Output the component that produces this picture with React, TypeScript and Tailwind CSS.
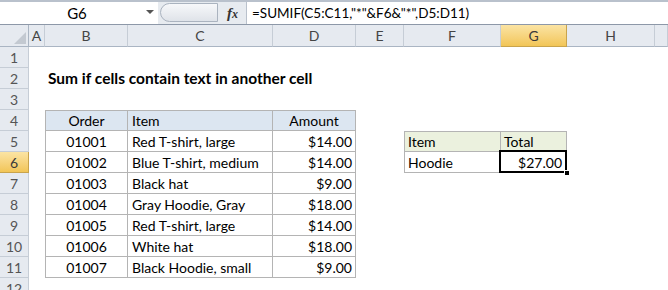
import { ReactNode } from "react";

type CellProps = {
  children?: ReactNode;
  className?: string;
};

const Cell = ({ children, className = "" }: CellProps) => (
  <div className={`flex items-center overflow-visible whitespace-nowrap ${className}`}>
    {children}
  </div>
);

const colLetters = ["A", "B", "C", "D", "E", "F", "G", "H", ""];

const orders = [
  { order: "01001", item: "Red T-shirt, large", amount: "$14.00" },
  { order: "01002", item: "Blue T-shirt, medium", amount: "$14.00" },
  { order: "01003", item: "Black hat", amount: "$9.00" },
  { order: "01004", item: "Gray Hoodie, Gray", amount: "$18.00" },
  { order: "01005", item: "Red T-shirt, large", amount: "$14.00" },
  { order: "01006", item: "White hat", amount: "$18.00" },
  { order: "01007", item: "Black Hoodie, small", amount: "$9.00" },
];

const tbl = "border-[#b4b4b4]";

const RowHeader = ({ n }: { n: number }) => (
  <Cell
    className={`justify-center border-b border-r text-[14px] ${
      n === 6
        ? "bg-gradient-to-b from-[#fbe4a3] to-[#f2c556] border-[#c9a44c] text-[#3a3a3a]"
        : "bg-[#e6eaf0] border-[#c6cdd6] text-[#555]"
    }`}
  >
    {n}
  </Cell>
);

const App = () => {
  const rows: ReactNode[] = [];

  for (let n = 1; n <= 12; n++) {
    const r = n - 5; // index into orders for rows 5..11
    const cells: ReactNode[] = [<RowHeader key="h" n={n} />];
    // A
    cells.push(<Cell key="A" />);

    if (n === 2) {
      cells.push(
        <Cell key="B" className="col-span-3 pl-[3px] text-[15.5px] font-bold">
          Sum if cells contain text in another cell
        </Cell>
      );
    } else if (n === 4) {
      cells.push(
        <Cell key="B" className={`justify-center bg-[#dce6f1] border-l border-t border-r border-b ${tbl}`}>
          Order
        </Cell>,
        <Cell key="C" className={`pl-[4px] bg-[#dce6f1] border-t border-r border-b ${tbl}`}>
          Item
        </Cell>,
        <Cell key="D" className={`justify-center bg-[#dce6f1] border-t border-r border-b ${tbl}`}>
          Amount
        </Cell>
      );
    } else if (r >= 0 && r < orders.length) {
      const o = orders[r];
      cells.push(
        <Cell key="B" className={`justify-center border-l border-r border-b ${tbl}`}>
          {o.order}
        </Cell>,
        <Cell key="C" className={`pl-[4px] border-r border-b ${tbl}`}>
          {o.item}
        </Cell>,
        <Cell key="D" className={`justify-end pr-[3px] border-r border-b ${tbl}`}>
          {o.amount}
        </Cell>
      );
    } else {
      cells.push(<Cell key="B" />, <Cell key="C" />, <Cell key="D" />);
    }

    // E
    cells.push(<Cell key="E" />);

    if (n === 5) {
      cells.push(
        <Cell key="F" className={`pl-[3px] bg-[#ebf1de] border-l border-t border-r border-b ${tbl}`}>
          Item
        </Cell>,
        <Cell key="G" className={`pl-[3px] bg-[#ebf1de] border-t border-r border-b ${tbl}`}>
          Total
        </Cell>
      );
    } else if (n === 6) {
      cells.push(
        <Cell key="F" className={`pl-[3px] border-l border-r border-b ${tbl}`}>
          Hoodie
        </Cell>,
        <Cell key="G" className={`relative justify-end pr-[4px] border-r border-b ${tbl}`}>
          $27.00
          <div className="absolute -left-[2px] -top-[2px] -right-[1px] -bottom-[1px] border-2 border-black" />
          <div className="absolute -right-[4px] -bottom-[4px] h-[6px] w-[6px] bg-black border border-white" />
        </Cell>
      );
    } else {
      cells.push(<Cell key="F" />, <Cell key="G" />);
    }

    cells.push(<Cell key="H" />, <Cell key="I" />);
    rows.push(...cells.map((c, i) => <div key={`${n}-${i}`} className="contents">{c}</div>));
  }

  return (
    <div className="h-[290px] w-[668px] overflow-hidden bg-white text-[14px] text-black font-['Lato','Liberation_Sans',sans-serif]">
      {/* formula bar */}
      <div className="flex h-[25px] border-t-2 border-[#b9c1cc] border-b border-b-[#8d98a8] bg-white">
        <div className="relative flex w-[158px] items-center justify-center pr-[4px] text-[15px]">
          G6
          <span className="absolute right-[4px] top-[8px] h-0 w-0 border-x-[4px] border-t-[4px] border-x-transparent border-t-[#555]" />
        </div>
        <div className="relative flex w-[88px] items-center justify-end bg-[#e7ebf0] pr-[8px]">
          <div className="absolute left-[2px] top-[1px] h-[19px] w-[58px] rounded-l-full border border-[#aab3bf] bg-gradient-to-b from-[#f7f8fa] to-[#dfe3e9]" />
          <span className="relative font-['Liberation_Serif',serif] text-[15px] font-bold italic text-[#333]">
            f<span className="text-[12px]">x</span>
          </span>
        </div>
        <div className="flex flex-1 items-center border-l border-[#b9c1cc] pl-[5px] text-[13.5px]">
          =SUMIF(C5:C11,"*"&amp;F6&amp;"*",D5:D11)
        </div>
      </div>

      <div className="grid grid-cols-[29px_16px_83px_145px_83px_48px_97px_66px_88px_1fr] grid-rows-[22px] auto-rows-[21px]">
        {/* corner */}
        <div className="relative border-b border-r border-[#aab5c3] bg-[#e6eaf0]">
          <svg className="absolute bottom-[2px] right-[2px]" width="12" height="12" viewBox="0 0 12 12">
            <polygon points="12,0 12,12 0,12" fill="#c3c9d1" />
          </svg>
        </div>
        {colLetters.map((l, i) => (
          <Cell
            key={`col-${i}`}
            className={`justify-center border-b border-r text-[14px] ${
              l === "G"
                ? "bg-gradient-to-b from-[#fbe4a3] to-[#f2c556] border-[#c9a44c] text-[#3a3a3a]"
                : "bg-[#e6eaf0] border-[#c6cdd6] border-b-[#aab5c3] text-[#444]"
            }`}
          >
            {l}
          </Cell>
        ))}
        {rows}
      </div>
    </div>
  );
};

export default App;
